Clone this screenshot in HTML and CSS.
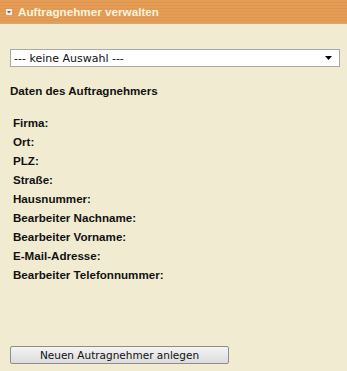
FILE: index.html
```html
<!DOCTYPE html>
<html>
<head>
<meta charset="utf-8">
<link rel="stylesheet" href="styles.css">
</head>
<body>
<div class="panel">
  <div class="header">
    <span class="toggle"><svg width="6" height="6" viewBox="0 0 6 6"><path d="M1 2 H5 L3 4.5 Z" fill="#6a5a8a"/></svg></span>
    <span class="title">Auftragnehmer verwalten</span>
  </div>
  <div class="content">
    <div class="select">
      <span>--- keine Auswahl ---</span>
      <svg width="7" height="4" viewBox="0 0 7 4"><path d="M0 0 H7 L3.5 4 Z" fill="#000"/></svg>
    </div>
    <div class="heading">Daten des Auftragnehmers</div>
    <ul class="fields">
      <li>Firma:</li>
      <li>Ort:</li>
      <li>PLZ:</li>
      <li>Straße:</li>
      <li>Hausnummer:</li>
      <li>Bearbeiter Nachname:</li>
      <li>Bearbeiter Vorname:</li>
      <li>E-Mail-Adresse:</li>
      <li>Bearbeiter Telefonnummer:</li>
    </ul>
    <button class="btn">Neuen Autragnehmer anlegen</button>
  </div>
</div>
</body>
</html>
```
FILE: styles.css
```css
html, body {
  margin: 0;
  padding: 0;
  background: #f1ecd1;
}
.panel {
  width: 347px;
  height: 371px;
  font-family: "Liberation Sans", Arial, sans-serif;
  display: flex;
  flex-direction: column;
}
.header {
  height: 23px;
  border-bottom: 1px solid #cfa87a;
  background: repeating-linear-gradient(to bottom, #e59d55 0px, #e59d55 2px, #de9650 2px, #de9650 3px);
  display: flex;
  align-items: center;
  padding-left: 6px;
  gap: 6px;
}
.toggle {
  width: 6px;
  height: 6px;
  background: #f3efe6;
  display: flex;
  margin-top: 1px;
}
.title {
  color: #fbf3dc;
  font-weight: bold;
  font-size: 11.7px;
}
.content {
  padding: 25px 7px 0 10px;
  display: flex;
  flex-direction: column;
  flex: 1;
}
.select {
  height: 16px;
  border: 1px solid #a9a9a9;
  background: #fff;
  display: flex;
  align-items: center;
  justify-content: space-between;
  padding: 0 7px 0 3px;
  font-family: "DejaVu Sans", Tahoma, sans-serif;
  font-size: 11px;
  color: #111;
}
.heading {
  margin-top: 17px;
  font-weight: bold;
  font-size: 11.6px;
  color: #111;
}
.fields {
  list-style: none;
  margin: 16px 0 0 3px;
  padding: 0;
}
.fields li {
  font-weight: bold;
  font-size: 11.6px;
  line-height: 19px;
  color: #111;
}
.btn {
  margin-top: auto;
  margin-bottom: 7px;
  width: 219px;
  height: 18px;
  padding: 0;
  border: 1px solid #8d8d8d;
  border-radius: 2px;
  background: linear-gradient(to bottom, #f4f4f4, #dcdcdc);
  font-family: "DejaVu Sans", Tahoma, sans-serif;
  font-size: 10.5px;
  color: #111;
}
```
